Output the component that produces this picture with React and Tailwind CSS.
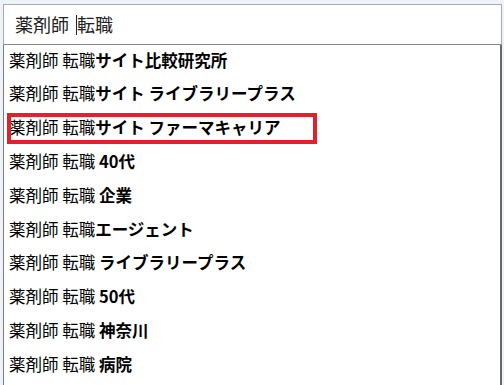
import React from 'react';

const suggestions = [
  { base: '薬剤師 転職', bold: 'サイト比較研究所' },
  { base: '薬剤師 転職', bold: 'サイト ライブラリープラス' },
  { base: '薬剤師 転職', bold: 'サイト ファーマキャリア', marked: true },
  { base: '薬剤師 転職', bold: ' 40代' },
  { base: '薬剤師 転職', bold: ' 企業' },
  { base: '薬剤師 転職', bold: 'エージェント' },
  { base: '薬剤師 転職', bold: ' ライブラリープラス' },
  { base: '薬剤師 転職', bold: ' 50代' },
  { base: '薬剤師 転職', bold: ' 神奈川' },
  { base: '薬剤師 転職', bold: ' 病院' },
];

const font = { fontFamily: '"Noto Sans CJK JP", "Noto Sans", sans-serif' };

export default function App() {
  return (
    <div className="w-[504px] h-[385px] overflow-hidden bg-[#eef2f9] pt-[4px] pl-[3px] pr-[2px]" style={font}>
      {/* search box */}
      <div className="h-[41px] bg-white border border-[#a9a9a9] border-b-[#8a8a8a] flex items-center pl-[11px] text-[18px] text-[#222]">
        <span>薬剤師</span>
        <span className="ml-[7px] w-px h-[20px] bg-[#222]"></span>
        <span>転職</span>
      </div>

      {/* suggestion list */}
      <div className="relative bg-white border-l border-l-[#7a7a7a] border-r-2 border-r-[#6a6a6a] h-[340px]">
        {suggestions.map((s, i) => (
          <div key={i} className="h-[33.8px] flex items-center pl-[5px] pb-[4px] text-[16.5px] text-black whitespace-pre">
            <span>{s.base}</span>
            <span className="font-bold">{s.bold}</span>
          </div>
        ))}
        {/* highlight annotation */}
        <div className="absolute left-[3px] top-[68px] w-[310px] h-[31px] border-[4px] border-[#e3212b]"></div>
      </div>
    </div>
  );
}
